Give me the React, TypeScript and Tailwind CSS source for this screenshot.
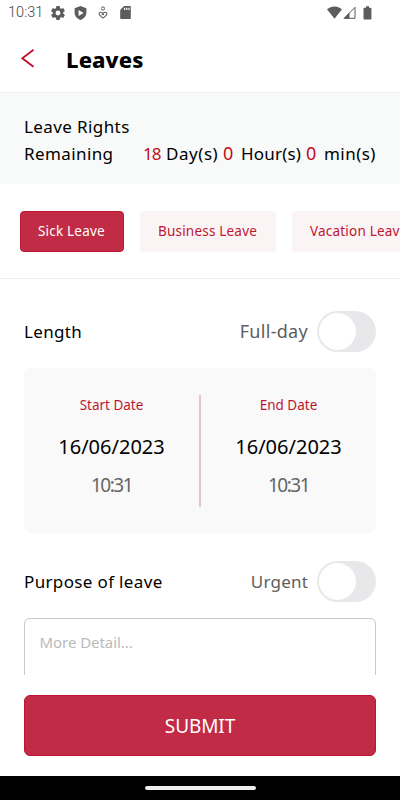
import { useState } from "react";
import clsx from "clsx";

interface ToggleProps {
  label: string;
  on: boolean;
  className?: string;
  onChange: () => void;
}

const leaveTypes = [
  { name: "Sick Leave", className: "w-[104px]" },
  { name: "Business Leave", className: "w-[136px]" },
  { name: "Vacation Leave", className: "w-[136px]" },
];

const StatusBar = () => (
  <div className="flex h-[25px] shrink-0 items-center pl-[8px] pr-[28px] text-[#5c5c5c]">
    <span className="w-[43px] font-['Roboto',sans-serif] text-[14.5px] font-light leading-[25px] tracking-[0.05px] text-[#444]">10:31</span>
    <svg className="h-[14px] w-[14px]" viewBox="2 2 20 20" fill="currentColor">
      <path d="M19.43 12.98c.04-.32.07-.64.07-.98s-.03-.66-.07-.98l2.11-1.65a.5.5 0 0 0 .12-.64l-2-3.46a.5.5 0 0 0-.61-.22l-2.49 1a7.3 7.3 0 0 0-1.69-.98l-.38-2.65A.49.49 0 0 0 14 2h-4a.49.49 0 0 0-.49.42l-.38 2.65c-.61.25-1.17.59-1.69.98l-2.49-1a.49.49 0 0 0-.61.22l-2 3.46a.5.5 0 0 0 .12.64l2.11 1.65c-.04.32-.07.65-.07.98s.03.66.07.98l-2.11 1.65a.5.5 0 0 0-.12.64l2 3.46c.12.22.39.3.61.22l2.49-1c.52.4 1.08.73 1.69.98l.38 2.65c.03.24.24.42.49.42h4c.25 0 .46-.18.49-.42l.38-2.65c.61-.25 1.17-.59 1.69-.98l2.49 1c.23.09.49 0 .61-.22l2-3.46a.5.5 0 0 0-.12-.64zM12 15.5a3.5 3.5 0 1 1 0-7 3.5 3.5 0 0 1 0 7z" />
    </svg>
    <svg className="ml-[9px] h-[14px] w-[13px]" viewBox="0 0 13 14" fill="currentColor">
      <path fillRule="evenodd" d="M6.5 0 12.4 2.2V6.6C12.4 10.1 9.9 13 6.5 14 3.1 13 .6 10.1.6 6.6V2.2ZM4.6 4v6l5-3Z" />
    </svg>
    <svg className="ml-[11px] h-[13px] w-[10px]" viewBox="0 0 10 13" fill="none" stroke="currentColor">
      <circle cx="5" cy="2.5" r="1.6" strokeWidth="1" />
      <path d="M5 7.8C4.3 5.9 1.1 5.6 1.1 8c0 1.5 2.4 2.8 3.9 4.1C6.5 10.8 8.9 9.5 8.9 8 8.9 5.6 5.7 5.9 5 7.8L3.6 9.2M5 7.8l1 1" strokeWidth="1.1" />
    </svg>
    <svg className="ml-[12px] h-[13px] w-[11px]" viewBox="0 0 11 13" fill="currentColor">
      <path fillRule="evenodd" d="M4 0h6q.8 0 .8.8v11.4q0 .8-.8.8H1q-.8 0-.8-.8V4ZM4 1.8v2.2h1.2V1.8ZM6.2 1.8v2.2h1.2V1.8ZM8.4 1.8v2.2h1.2V1.8Z" />
    </svg>
    <svg className="ml-auto h-[13px] w-[15px]" viewBox="0 0 15 13" fill="currentColor">
      <path d="M0 3.3C4-.6 11-.6 15 3.3L7.5 12.7Z" />
    </svg>
    <svg className="ml-[1px] h-[13px] w-[13px]" viewBox="0 0 13 13">
      <path d="M1.2 12.3H12V1.3Z" fill="none" stroke="currentColor" strokeWidth="1" />
      <path d="M.5 12.8 6.5 6.5v6.3Z" fill="currentColor" />
    </svg>
    <svg className="ml-[7px] h-[14px] w-[9px]" viewBox="0 0 9 14" fill="currentColor">
      <path d="M3 .3h3v1.4h1.7q.7 0 .7.7v10.4q0 .7-.7.7H1.2q-.7 0-.7-.7V2.4q0-.7.7-.7H3Z" />
    </svg>
  </div>
);

const Toggle = ({ label, on, className, onChange }: ToggleProps) => (
  <div className="flex items-center gap-[9px]">
    <span className={clsx("text-[#5e5e5e]", className)}>{label}</span>
    <button
      role="switch"
      aria-checked={on}
      aria-label={label}
      onClick={onChange}
      className={clsx("flex h-[41px] w-[59px] items-center rounded-full px-[2px]", on ? "justify-end bg-[#c22b45]" : "bg-[#e8e8ea]")}
    >
      <span className="h-[37px] w-[37px] rounded-full bg-white" />
    </button>
  </div>
);

const DateColumn = ({ title }: { title: string }) => (
  <div className="flex flex-1 flex-col items-center whitespace-nowrap">
    <span className="mt-[27px] text-[13.5px] leading-[20px] text-[#bd1631]">{title}</span>
    <span className="mt-[17px] text-[20px] leading-[30px] text-black">16/06/2023</span>
    <span className="mt-[8px] text-[19px] leading-[30px] tracking-[-1.5px] text-[#666]">10:31</span>
  </div>
);

const App = () => {
  const [selected, setSelected] = useState("Sick Leave");
  const [fullDay, setFullDay] = useState(false);
  const [urgent, setUrgent] = useState(false);

  return (
    <div className="flex h-[800px] w-[400px] flex-col overflow-hidden bg-white font-['Noto_Sans',sans-serif] text-black">
      <StatusBar />

      <header className="flex h-[67px] shrink-0 items-center pl-[21px]">
        <button aria-label="Back">
          <svg className="h-[20px] w-[14px]" viewBox="0 0 14 20" fill="none" stroke="#c20a22" strokeWidth="1.7">
            <path d="M12.5 .8 1.300 9.300l11.200 8.500" />
          </svg>
        </button>
        <h1 className="ml-[31px] text-[22px] font-extrabold leading-[30px] tracking-[0.1px]">Leaves</h1>
      </header>

      <section className="h-[92px] shrink-0 border-t border-[#f1f2f2] bg-[#f8faf9] px-[24px] pt-[20px] text-[17px] leading-[27px]">
        <p className="tracking-[0.4px]">Leave Rights</p>
        <div className="flex justify-between whitespace-nowrap">
          <span className="tracking-[0.4px]">Remaining</span>
          <p className="flex">
            <span className="w-[23px] tracking-[-1px] text-[#c20a22]">18</span>
            <span className="w-[57px] tracking-[0.55px]">Day(s)</span>
            <span className="w-[18px] text-[18px] text-[#c20a22]">0</span>
            <span className="w-[65px] tracking-[0.2px]">Hour(s)</span>
            <span className="w-[18px] text-[18px] text-[#c20a22]">0</span>
            <span className="w-[52px] tracking-[0.45px]">min(s)</span>
          </p>
        </div>
      </section>

      <nav className="flex h-[95px] shrink-0 gap-[16px] overflow-hidden border-b border-[#efefef] pl-[20px] pt-[27px]">
        {leaveTypes.map((type) => (
          <button
            key={type.name}
            onClick={() => setSelected(type.name)}
            className={clsx(
              "h-[41px] shrink-0 whitespace-nowrap rounded-[4px] border pl-[17px] text-left text-[13.5px] tracking-[0.2px]",
              type.className,
              selected === type.name ? "border-[#bd1631] bg-[#c22b45] text-white" : "border-[#fbf4f5] bg-[#fbf4f5] text-[#bd1631]"
            )}
          >
            {type.name}
          </button>
        ))}
      </nav>

      <main className="h-[396px] shrink-0 overflow-hidden px-[24px] pt-[32px]">
        <div className="flex h-[41px] items-center justify-between">
          <h2 className="text-[17px] tracking-[0.35px]">Length</h2>
          <Toggle label="Full-day" on={fullDay} onChange={() => setFullDay(!fullDay)} className="text-[18px] tracking-[0.3px]" />
        </div>

        <div className="mt-[16px] flex h-[165px] rounded-[8px] bg-[#f9f9f9]">
          <DateColumn title="Start Date" />
          <div className="mt-[27px] h-[112px] w-[2px] bg-[#e6c3c9]" />
          <DateColumn title="End Date" />
        </div>

        <div className="mt-[28px] flex h-[41px] items-center justify-between">
          <h2 className="text-[17px] tracking-[0.35px]">Purpose of leave</h2>
          <Toggle label="Urgent" on={urgent} onChange={() => setUrgent(!urgent)} className="text-[17px] tracking-[0.2px]" />
        </div>

        <textarea
          placeholder="More Detail..."
          className="mt-[16px] block h-[120px] w-full resize-none rounded-[6px] border border-[#c9c9c9] px-[14.5px] pt-[11px] text-[15px] leading-[24px] tracking-[-0.05px] outline-none placeholder:text-[#bababa]"
        />
      </main>

      <div className="h-[101px] shrink-0 px-[24px] pt-[20px]">
        <button className="h-[61px] w-full rounded-[6px] border border-[#bd1631] bg-[#c22b45] pt-[2px] text-[19px] tracking-[-0.1px] text-white">SUBMIT</button>
      </div>

      <div className="flex h-[24px] shrink-0 items-center justify-center bg-black">
        <div className="h-[4px] w-[111px] rounded-full bg-[#eee]" />
      </div>
    </div>
  );
};

export default App;
